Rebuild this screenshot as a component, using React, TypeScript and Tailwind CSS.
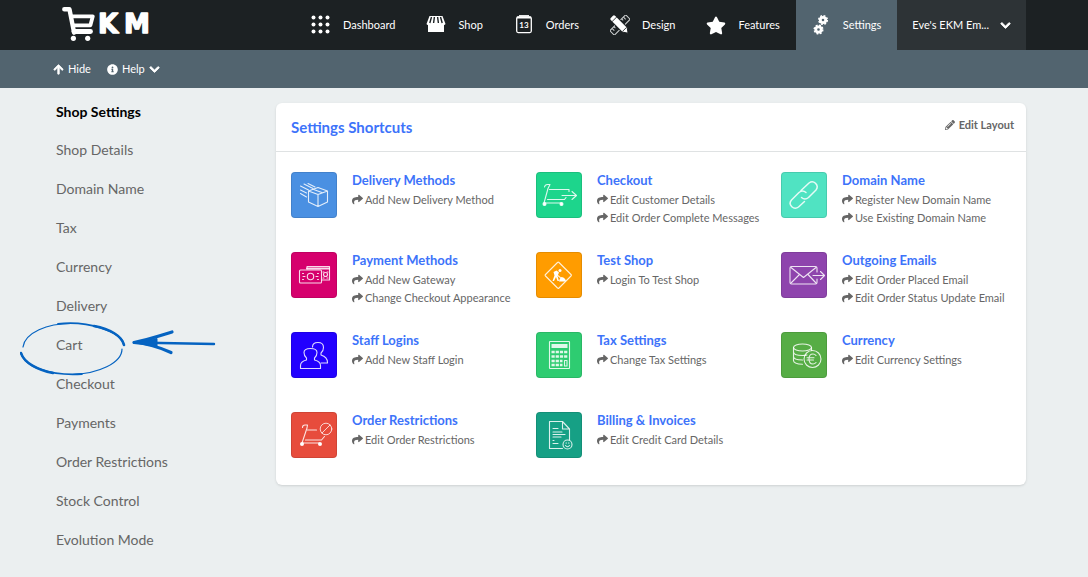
import React from "react";
import {
  FaArrowUp,
  FaChevronDown,
  FaInfoCircle,
  FaPencilAlt,
  FaShare,
  FaStar,
} from "react-icons/fa";

const Logo = () => (
  <svg width="96" height="42" viewBox="0 0 96 42" role="img" aria-label="EKM">
    <g fill="none" stroke="#fff" strokeLinecap="round" strokeLinejoin="round">
      <path d="M2.300 5.300h5.200l4.600 23.400" strokeWidth="4.400" />
      <path d="M9 12.300h21.800l-2.400 9H12" strokeWidth="3.800" />
      <path d="M12 27.500h16.500" strokeWidth="4.800" />
    </g>
    <circle cx="11.400" cy="34.300" r="2.600" fill="#fff" />
    <circle cx="25.700" cy="34.300" r="2.600" fill="#fff" />
    <g
      fill="#fff"
      stroke="#fff"
      strokeWidth="1.400"
      strokeLinejoin="round"
      fontFamily="'DejaVu Sans', sans-serif"
      fontWeight="700"
      fontSize="26"
    >
      <text x="36" y="28.500">K</text>
      <text x="62" y="28.500">M</text>
    </g>
  </svg>
);

const DotsIcon = () => (
  <svg width="20" height="20" viewBox="0 0 20 20" fill="#fff">
    {[2, 9, 16].map((y) =>
      [2, 9, 16].map((x) => (
        <circle key={`${x}-${y}`} cx={x + 0.5} cy={y + 0.5} r="2" />
      ))
    )}
  </svg>
);

const ShopIcon = () => (
  <svg width="20" height="20" viewBox="0 0 20 20">
    <path d="M3.500 1h13l3 8a2 2 0 0 1-1.500 1v7H2v-7a2 2 0 0 1-1.500-1z" fill="#fff" />
    <path
      d="M5.500 2 3.800 8M8.400 2l-.8 6M11.600 2l.8 6M14.500 2l1.700 6"
      stroke="#1c2123"
      strokeWidth="1.400"
    />
  </svg>
);

const OrdersIcon = () => (
  <svg width="20" height="20" viewBox="0 0 20 20">
    <rect x="2.700" y="2" width="14.600" height="15.600" rx="1.500" fill="none" stroke="#fff" strokeWidth="1.300" />
    <path d="M3 2.500h14" stroke="#fff" strokeWidth="2" />
    <path d="M5 .8h10" stroke="#fff" strokeWidth="1.400" />
    <text
      x="10"
      y="13"
      textAnchor="middle"
      fill="#fff"
      fontFamily="Lato, sans-serif"
      fontWeight="700"
      fontSize="8"
    >
      13
    </text>
  </svg>
);

const DesignIcon = () => (
  <svg width="20" height="20" viewBox="0 0 20 20">
    <g transform="rotate(-45 10 10)">
      <rect x="-1.200" y="6.800" width="22.400" height="6.400" fill="none" stroke="#cfd2d3" strokeWidth="1.100" />
      <path d="M2 7v3M4.500 7v2M15.500 7v2M18 7v3" stroke="#cfd2d3" strokeWidth="1" />
    </g>
    <g transform="rotate(45 10 10)">
      <path
        d="M0 6.500h16.500l5 3.500-5 3.500H0a2 2 0 0 1-2-2v-3a2 2 0 0 1 2-2z"
        fill="#fff"
        stroke="#1c2123"
        strokeWidth="1"
      />
      <path d="M2 6.500v7M16.300 7v6" stroke="#1c2123" strokeWidth=".8" />
    </g>
  </svg>
);

const Cog = ({ cx, cy }: { cx: number; cy: number }) => (
  <g transform={`translate(${cx} ${cy})`}>
    <circle r="2.700" fill="none" stroke="#fff" strokeWidth="2.800" />
    <circle r="4.300" fill="none" stroke="#fff" strokeWidth="1.500" strokeDasharray="1.900 1.477" />
  </g>
);

const CogsIcon = () => (
  <svg width="20" height="20" viewBox="0 0 20 20">
    <Cog cx={12} cy={5} />
    <Cog cx={7.5} cy={14.5} />
  </svg>
);

const Chevron = () => (
  <FaChevronDown size={11} stroke="currentColor" strokeWidth={40} aria-hidden="true" />
);

const nav = [
  { label: "Dashboard", icon: <DotsIcon /> },
  { label: "Shop", icon: <ShopIcon /> },
  { label: "Orders", icon: <OrdersIcon /> },
  { label: "Design", icon: <DesignIcon /> },
  { label: "Features", icon: <FaStar size={21} /> },
  { label: "Settings", icon: <CogsIcon />, active: true },
];

const sidebar = [
  "Shop Details",
  "Domain Name",
  "Tax",
  "Currency",
  "Delivery",
  "Cart",
  "Checkout",
  "Payments",
  "Order Restrictions",
  "Stock Control",
  "Evolution Mode",
];

const boxIcon = (
  <>
    <path d="m27 15.500 9.500 3.500v11L27 34.500 17.500 30V19zM17.500 19l9.500 3.500 9.500-3.500M27 22.500v12M22 17.300l9.500 3.500" />
    <path d="m17 11.500 7 3.500M13 12l9 4.500M9.500 14l8 4M9.500 18l6 3M9.500 21.500l6 3.500" />
  </>
);

const checkoutIcon = (
  <>
    <path d="M8.500 15q.5-2.500 3-2.500h2.500l-2 4L8 31h17M13.500 17.500H33v2M11.500 27.500h17l1.500-2" />
    <path d="M26 23.500h14.500M36 19.500l4.500 4-4.500 4" />
    <circle cx="8.500" cy="32" r="1.500" fill="#fff" />
    <circle cx="25.500" cy="32" r="1.500" fill="#fff" />
  </>
);

const linkIcon = (
  <g strokeWidth="1.500">
    <path d="M20 18.500l8-7.500q3.500-2.500 6.500.3 3.200 3.200.5 6.700l-7.500 7.500q-3.500 3-7 0" />
    <path d="M25 20.500q-3.500-3-7 0L10.500 28q-3 3.500.3 6.700 3.200 3 6.700.3l6-5.500" />
  </g>
);

const moneyIcon = (
  <>
    <path d="M16 17v-2.500h22.500v13.500H31" />
    <path d="M16 16.500h22" strokeWidth="1.800" />
    <rect x="8.500" y="18" width="22" height="13" rx="1" />
    <circle cx="19.500" cy="24.500" r="3.200" />
    <path d="M12 24.500h2M25 24.500h2M11.500 21.500h1M26.500 21.500h1M11.500 27.500h1M26.500 27.500h1" />
    <circle cx="34.500" cy="22.500" r="2" />
    <path d="M32 20h1M36 20h1M32 26h1M36 26h1" />
  </>
);

const roadworksIcon = (
  <>
    <path d="m23 10.500 12 12q.8.800 0 1.500l-12 12q-.8.800-1.500 0l-12-12q-.8-.7 0-1.500l12-12q.7-.8 1.500 0z" />
    <g fill="#fff" stroke="none">
      <circle cx="24" cy="18.500" r="1.500" />
      <path d="m17.500 20 3-1.500 2.500 2-1.500 3.500 1.500 5h-1.500L20 25l-2 4h-1.500l2-5.500z" />
      <path d="M23 29.500q0-2.500 2.500-4.500 4 .5 4.500 4.500z" />
    </g>
    <path d="m20 22 6 5" />
  </>
);

const emailIcon = (
  <>
    <path d="M36 20v-4q0-1.500-1.500-1.500h-24Q9 14.500 9 16v14.500Q9 32 10.500 32h24q1.500 0 1.500-1.500V27" />
    <path d="m10 15.500 12.500 10 12.500-10M10 31l8.500-8.500M35 31l-8-8.500M32 23.500h11M39.500 19.500l4 4-4 4" />
  </>
);

const staffIcon = (
  <>
    <path d="M9.500 36.500h20v-3q0-4-6-5.500v-2q2.500-2 2.500-5.500 0-4-6.500-4t-6.500 4q0 3.500 2.500 5.500v2q-6 1.500-6 5.500z" />
    <path d="M21.500 15q0-4.500 5.500-4.500t5.500 5q0 3.500-2.500 5.500v2q6.500 2 6.500 7.500v.5h-6.500" />
  </>
);

const calculatorIcon = (
  <>
    <rect x="13.500" y="9.500" width="20" height="27" rx=".5" />
    <path d="M15.500 14h16" strokeWidth="4" strokeLinecap="butt" />
    <path
      d="M15.500 20h16M15.500 24.500h16M15.500 29h11M15.500 33h11"
      strokeWidth="2.600"
      strokeDasharray="3.200 1"
      strokeLinecap="butt"
    />
    <rect x="28.500" y="28.500" width="2.500" height="5.500" />
  </>
);

const coinsIcon = (
  <>
    <ellipse cx="21.500" cy="15.500" rx="9" ry="3.500" />
    <path d="M12.500 15.500v13q0 3.500 9 3.700M30.500 15.500v3M12.500 20q0 3.500 9 3.500 3 0 4.500-.5M12.500 24.500q0 3.500 9 3.500" />
    <circle cx="31.500" cy="27" r="8.500" />
    <path d="M35 23.500q-1.200-1.500-3-1.500-4 0-4 5t4 5q1.800 0 3-1.500M26 25.800h7M26 28h6.500" />
  </>
);

const restrictedIcon = (
  <>
    <path d="M11.500 15.500q0-2.500 2.500-2.500h2.500l-.5 3L11 31h17.500M16.500 18h9M14.500 28h16l3-3.500" />
    <circle cx="11" cy="32" r="1.500" fill="#fff" />
    <circle cx="29" cy="32" r="1.500" fill="#fff" />
    <circle cx="35" cy="17" r="5.800" strokeWidth=".9" />
    <path d="m31 21 8-8" strokeWidth=".9" />
  </>
);

const invoiceIcon = (
  <>
    <path d="M26.500 36.500h-13v-27h13l7 7.500v11M26.500 9.500V17h7" />
    <path d="M17 16.500h5M17 20h9M17 22.500h12M17 25h8M17 28.500h1M17 31.500h5" />
    <circle cx="31.500" cy="32.500" r="4.500" />
    <path d="M29.500 33.500q2 2.500 4 0M30 31h.5M32.500 31h.5" />
  </>
);

const shortcuts = [
  { title: "Delivery Methods", color: "bg-[#4a90e2]", icon: boxIcon, links: ["Add New Delivery Method"] },
  {
    title: "Checkout",
    color: "bg-[#1dd58c]",
    icon: checkoutIcon,
    links: ["Edit Customer Details", "Edit Order Complete Messages"],
  },
  {
    title: "Domain Name",
    color: "bg-[#50e3c2]",
    icon: linkIcon,
    links: ["Register New Domain Name", "Use Existing Domain Name"],
  },
  {
    title: "Payment Methods",
    color: "bg-[#d6006d]",
    icon: moneyIcon,
    links: ["Add New Gateway", "Change Checkout Appearance"],
  },
  { title: "Test Shop", color: "bg-[#ff9c00]", icon: roadworksIcon, links: ["Login To Test Shop"] },
  {
    title: "Outgoing Emails",
    color: "bg-[#8e44ad]",
    icon: emailIcon,
    links: ["Edit Order Placed Email", "Edit Order Status Update Email"],
  },
  { title: "Staff Logins", color: "bg-[#2200ff]", icon: staffIcon, links: ["Add New Staff Login"] },
  { title: "Tax Settings", color: "bg-[#2ecc71]", icon: calculatorIcon, links: ["Change Tax Settings"] },
  { title: "Currency", color: "bg-[#56ad45]", icon: coinsIcon, links: ["Edit Currency Settings"] },
  { title: "Order Restrictions", color: "bg-[#e74c3c]", icon: restrictedIcon, links: ["Edit Order Restrictions"] },
  { title: "Billing & Invoices", color: "bg-[#16a085]", icon: invoiceIcon, links: ["Edit Credit Card Details"] },
];

const CartHighlight = () => (
  <svg
    className="absolute -left-9 -top-2 pointer-events-none"
    width="200"
    height="60"
    viewBox="0 -1 200 60"
    fill="none"
    stroke="#0563c1"
    strokeLinecap="round"
    aria-hidden="true"
  >
    <path d="M3 29C5 15 27 5 53 5.500" strokeWidth="1.200" />
    <path d="M38 5.800C68 2.500 101 13 104 27" strokeWidth="1.800" />
    <path d="M74 8c16 3 28 10 30 19" strokeWidth="2.600" />
    <path d="M102 31c0 14-24 25-50 25.500" strokeWidth="1.200" />
    <path d="M1 35c4 14 29 23 61 21" strokeWidth="1.800" />
    <path d="M1 35c3 10 17 17 32 20" strokeWidth="2.600" />
    <path d="M114 24.500 194 26" strokeWidth="2.400" />
    <path d="M152 14c-13 4-25 8-38 10.500 14 1 26 5 37 10" strokeWidth="3.200" strokeLinejoin="round" />
    <path d="m114 24.500 23-4v8z" fill="#0563c1" strokeWidth="1" />
  </svg>
);

export default function App() {
  return (
    <div className="min-h-screen bg-[#ebeff0] font-['Lato',sans-serif] text-[#666]">
      <header className="flex h-[50px] items-stretch justify-between bg-[#1c2123] px-[62px] text-[11px] text-white">
        <a href="#" className="flex pt-1">
          <Logo />
        </a>
        <div className="flex">
          <nav className="flex">
            {nav.map((item) => (
              <a
                key={item.label}
                href="#"
                className={`flex items-center gap-3 pl-[15px] pr-4 ${
                  item.active ? "bg-[#52646f]" : ""
                }`}
              >
                <span className="flex w-5 justify-center" aria-hidden="true">
                  {item.icon}
                </span>
                {item.label}
              </a>
            ))}
          </nav>
          <button type="button" className="flex items-center gap-[11px] bg-[#2d3336] px-[15px]">
            Eve's EKM Em...
            <Chevron />
          </button>
        </div>
      </header>

      <div className="flex h-[38px] items-center gap-4 bg-[#52646f] px-[53px] text-[11px] text-white">
        <button type="button" className="flex items-center gap-1">
          <FaArrowUp size={11} stroke="currentColor" strokeWidth={30} aria-hidden="true" />
          Hide
        </button>
        <button type="button" className="flex items-center gap-1">
          <FaInfoCircle size={11} aria-hidden="true" />
          Help
          <Chevron />
        </button>
      </div>

      <main className="flex items-start pl-14 pr-[62px]">
        <aside className="w-[220px] shrink-0 pt-[5px] text-sm">
          <h2 className="flex h-[37px] items-center font-bold text-black">Shop Settings</h2>
          <ul>
            {sidebar.map((label) => (
              <li key={label} className="relative flex h-[39px] items-center">
                <a href="#">{label}</a>
                {label === "Cart" && <CartHighlight />}
              </li>
            ))}
          </ul>
        </aside>

        <section className="mt-[15px] grow rounded-md bg-white shadow-sm">
          <div className="flex h-[49px] items-center justify-between border-b border-[#dfe2e3] pl-[15px] pr-3">
            <h1 className="text-[15px] font-bold text-[#3d73fa]">Settings Shortcuts</h1>
            <button type="button" className="flex items-center gap-1 pb-1 text-[11px] font-bold">
              <FaPencilAlt size={10} aria-hidden="true" />
              Edit Layout
            </button>
          </div>

          <div className="grid auto-rows-[60px] grid-cols-3 gap-y-5 pb-[13px] pl-[15px] pt-5">
            {shortcuts.map((item) => (
              <div key={item.title} className="flex gap-[15px]">
                <a
                  href="#"
                  aria-label={item.title}
                  className={`size-[46px] shrink-0 rounded border border-black/10 ${item.color}`}
                >
                  <svg
                    className="-m-px"
                    width="46"
                    height="46"
                    viewBox="0 0 46 46"
                    fill="none"
                    stroke="#fff"
                    strokeOpacity=".85"
                    strokeWidth="1.100"
                    strokeLinecap="round"
                    strokeLinejoin="round"
                    aria-hidden="true"
                  >
                    {item.icon}
                  </svg>
                </a>
                <div className="-mt-0.5 whitespace-nowrap">
                  <h3 className="text-[13px] leading-5 font-bold text-[#3d73fa]">
                    <a href="#">{item.title}</a>
                  </h3>
                  <ul className="pt-px text-[11px] leading-[18px]">
                    {item.links.map((link) => (
                      <li key={link}>
                        <a href="#" className="flex items-center gap-0.5">
                          <FaShare size={11} className="-mt-0.5" aria-hidden="true" />
                          {link}
                        </a>
                      </li>
                    ))}
                  </ul>
                </div>
              </div>
            ))}
          </div>
        </section>
      </main>
    </div>
  );
}
